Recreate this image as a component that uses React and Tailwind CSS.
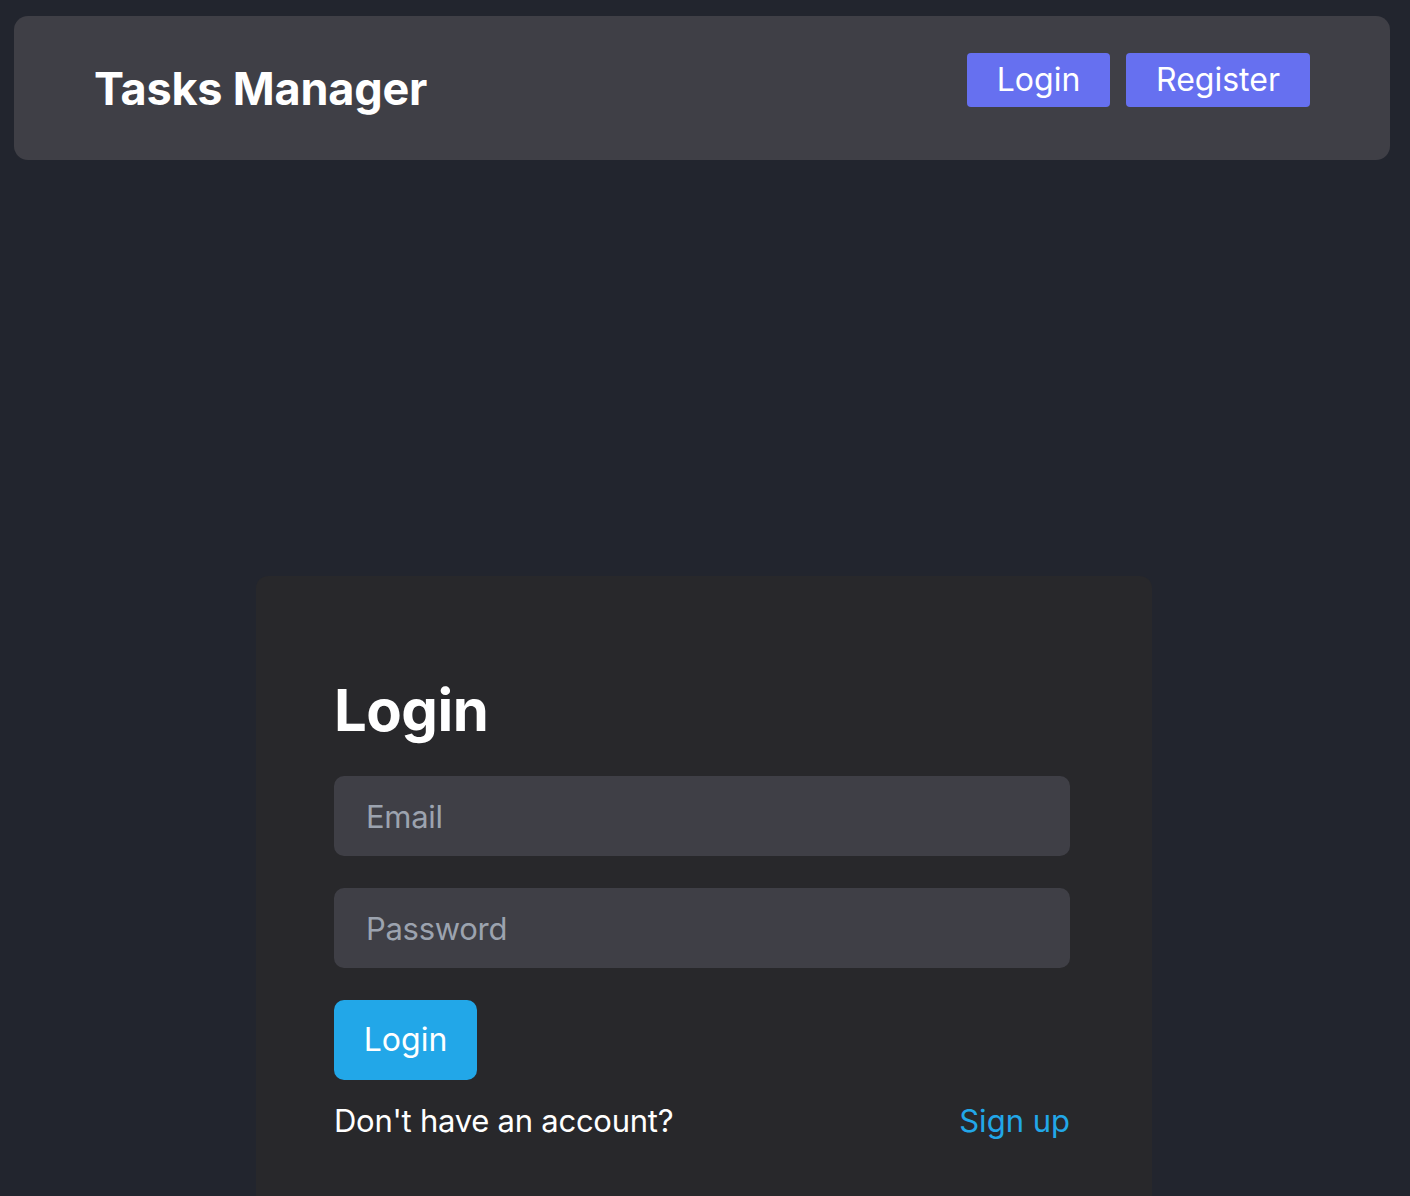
export default function App() {
  return (
    <div className="min-h-[1196px] bg-[#22252e] pt-4 font-['Inter',sans-serif] text-white">
      {/* Header */}
      <header className="ml-[14px] mr-[20px] flex h-[144px] items-start justify-between rounded-[14px] bg-[#3f3f46] px-20 pt-[37px]">
        <h1 className="mt-[6px] text-[45px] font-bold leading-[60px] tracking-[-0.2px]">Tasks Manager</h1>
        <nav className="flex gap-4">
          <button className="h-[54px] w-[143px] rounded-[4px] bg-[#6670f0] text-[32px] leading-none">Login</button>
          <button className="h-[54px] w-[184px] rounded-[4px] bg-[#6670f0] text-[32px] leading-none">Register</button>
        </nav>
      </header>

      {/* Card */}
      <main className="mt-[416px] flex justify-center pr-[2px]">
        <div className="w-[896px] rounded-t-[12px] bg-[#28282b] pl-[78px] pr-[82px] pt-[96px] pb-[56px]">
          <h2 className="text-[58px] font-bold leading-[76px] tracking-[-0.5px]">Login</h2>
          <form className="mt-[28px] flex flex-col gap-8">
            <input
              type="email"
              placeholder="Email"
              className="h-20 w-full rounded-[10px] bg-[#3f3f46] px-8 text-[31px] tracking-[-0.3px] text-white outline-none placeholder:text-[#9ca3af]"
            />
            <input
              type="password"
              placeholder="Password"
              className="h-20 w-full rounded-[10px] bg-[#3f3f46] px-8 text-[31px] tracking-[-0.3px] text-white outline-none placeholder:text-[#9ca3af]"
            />
          </form>
          <button className="mt-8 h-20 w-[143px] rounded-[10px] bg-[#22a7e8] text-[32px] leading-none">Login</button>
          <div className="mt-[14px] flex items-center justify-between text-[31px] leading-[54px]">
            <span className="tracking-[-0.25px]">Don't have an account?</span>
            <a className="text-[#22a7e8]">Sign up</a>
          </div>
        </div>
      </main>
    </div>
  )
}
